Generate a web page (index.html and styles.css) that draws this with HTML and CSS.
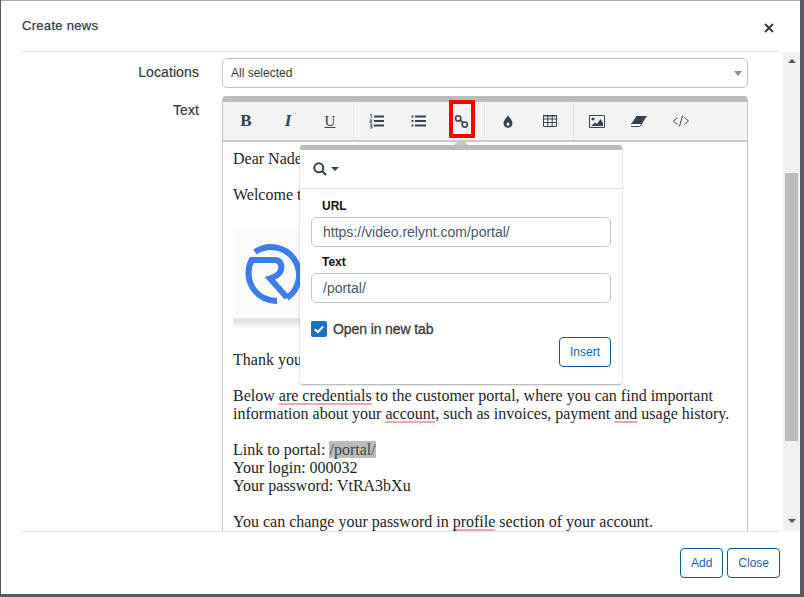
FILE: index.html
```html
<!DOCTYPE html>
<html lang="en">
<head>
<meta charset="UTF-8">
<title>Create news</title>
<link rel="stylesheet" href="styles.css">
</head>
<body>
<div class="modal">
    <div class="modalHeader">
        <h4>Create news</h4>
        <svg class="closeIcon" width="10" height="10" viewBox="0 0 10 10"><path d="M1 1l8 8M9 1l-8 8" stroke="#2f3b45" stroke-width="2"/></svg>
    </div>

    <div class="modalMiddle">
        <div class="modalBody">
            <div class="formRow">
                <label class="rowLabel">Locations</label>
                <div class="fakeSelect">
                    <span>All selected</span>
                    <i class="selectCaret"></i>
                </div>
            </div>
            <div class="formRow textRow">
                <label class="rowLabel">Text</label>
                <div class="editor">
                    <div class="toolbar">
                        <div class="toolGroup">
                            <button class="toolBtn serif"><b>B</b></button>
                            <button class="toolBtn serif"><b><i>I</i></b></button>
                            <button class="toolBtn serif underlined">U</button>
                        </div>
                        <div class="toolGroup">
                            <button class="toolBtn">
                                <svg width="16" height="16" viewBox="0 0 16 16"><path d="M5 3.500h10M5 8h10M5 12.500h10" stroke="#34434f" stroke-width="2"/><path d="M1 1.500h1.300v3.500M1 6.800h1.800v1.200h-1.800v1.400h2M1 11h2v4h-2M1 13h2" fill="none" stroke="#34434f" stroke-width=".8"/></svg>
                            </button>
                            <button class="toolBtn">
                                <svg width="16" height="16" viewBox="0 0 16 16"><path d="M4 3.500h11M4 8h11M4 12.500h11" stroke="#34434f" stroke-width="2"/><path d="M.5 2.500h2v2h-2zM.5 7h2v2h-2zM.5 11.500h2v2h-2z" fill="#34434f"/></svg>
                            </button>
                            <button class="toolBtn linkBtn">
                                <svg width="15" height="15" viewBox="0 0 15 15"><g fill="none" stroke="#34434f" stroke-width="1.600"><circle cx="4.200" cy="4.400" r="2.600"/><circle cx="10.800" cy="10.600" r="2.600"/><path d="M6 6.200l3 2.600"/></g></svg>
                                <span class="redBox"></span>
                            </button>
                        </div>
                        <div class="toolGroup">
                            <button class="toolBtn">
                                <svg width="12" height="15" viewBox="0 0 12 15"><path fill-rule="evenodd" d="M6 1c1 2.500 4.500 5 4.500 8.300a4.500 4.500 0 0 1-9 0C1.500 6 5 3.500 6 1zM6 8c-.8 1-1.500 1.500-1.500 2.300a1.500 1.500 0 0 0 3 0C7.500 9.500 6.800 9 6 8z" fill="#34434f"/></svg>
                            </button>
                            <button class="toolBtn">
                                <svg width="14" height="12" viewBox="0 0 14 12"><path d="M.5.500h13v11h-13zM.5 4h13M.5 7.500h13M4.800.500v11M9.200.500v11" fill="none" stroke="#34434f"/><path d="M0 0h14v1.500h-14z" fill="#34434f"/></svg>
                            </button>
                        </div>
                        <div class="toolGroup">
                            <button class="toolBtn">
                                <svg width="16" height="13" viewBox="0 0 16 13"><path d="M.5.500h15v12h-15z" fill="none" stroke="#34434f"/><circle cx="4" cy="4" r="1.600" fill="#34434f"/><path d="M2 11l4-3.500 2 1.500 3.500-5 2.500 4v3z" fill="#34434f"/></svg>
                            </button>
                            <button class="toolBtn">
                                <svg width="16" height="11" viewBox="0 0 16 11"><path d="M5.500 0h10.500l-5 7.500h-10.500z" fill="#34434f"/><path d="M.5 7.500h10.500l-2.300 3h-10z" fill="#fff" stroke="#34434f"/></svg>
                            </button>
                            <button class="toolBtn">
                                <svg width="16" height="12" viewBox="0 0 16 12"><path d="M4.500 2.500l-4 3.500 4 3.500M11.500 2.500l4 3.500-4 3.500M9.500 .5l-3 11" fill="none" stroke="#34434f"/></svg>
                            </button>
                        </div>
                    </div>

                    <div class="editArea">
                        <p>Dear Nade</p>
                        <p>Welcome t</p>
                        <div class="newsImage">
                            <svg width="200" height="91" viewBox="0 0 200 91"><g fill="none" stroke="#3f7ce8" stroke-width="6" filter="url(#soft)"><path d="M44 74a28 28 0 0 1-25.300-41h23.300c7 0 8 9 4 13.500c-3 3-6 4-9 5l17 19"/><path d="M22 25a28 28 0 0 1 32 46"/></g><defs><filter id="soft"><feGaussianBlur stdDeviation=".5"/></filter></defs></svg>
                        </div>
                        <p>Thank you</p>
                        <p>Below <span class="spell">are credentials</span> to the customer portal, where you can find important<br>
                        information about your <span class="spell">account</span>, such as invoices, payment <span class="spell">and</span> usage history.</p>
                        <p>Link to portal: <span class="picked">/portal/</span><br>
                        Your login: 000032<br>
                        Your password: VtRA3bXu</p>
                        <p>You can change your password in <span class="spell">profile</span> section of your account.</p>
                    </div>

                    <div class="linkPopover">
                        <i class="popArrow"></i>
                        <div class="popSearch">
                            <svg width="14" height="14" viewBox="0 0 14 14"><circle cx="5.800" cy="5.800" r="4.500" fill="none" stroke="#34434f" stroke-width="2"/><path d="M9 9l4 4" stroke="#34434f" stroke-width="2.200"/></svg>
                            <i class="searchCaret"></i>
                        </div>
                        <div class="popForm">
                            <label class="popLabel">URL</label>
                            <input class="popInput" type="text" value="https://video.relynt.com/portal/">
                            <label class="popLabel">Text</label>
                            <input class="popInput" type="text" value="/portal/">
                            <div class="checkLine">
                                <span class="fakeCheck">
                                    <svg width="16" height="16" viewBox="0 0 16 16"><path d="M3.800 8.200l3 2.800 5.400-5.600" fill="none" stroke="#fff" stroke-width="2"/></svg>
                                </span>
                                <span>Open in new tab</span>
                            </div>
                            <div class="popActions">
                                <button class="btn">Insert</button>
                            </div>
                        </div>
                    </div>
                </div>
            </div>
        </div>
        <div class="scrollbar">
            <i class="arrowUp"></i>
            <div class="scrollThumb"></div>
            <i class="arrowDown"></i>
        </div>
    </div>

    <div class="modalFooter">
        <button class="btn">Add</button>
        <button class="btn">Close</button>
    </div>
</div>
</body>
</html>
```

FILE: styles.css
```css
* {
    box-sizing: border-box;
}

html, body {
    margin: 0;
    padding: 0;
}

body {
    width: 804px;
    height: 597px;
    overflow: hidden;
    background-color: #565c61;
    font-family: "Liberation Sans", Arial, sans-serif;
    color: #2f3b45;
}

.modal {
    width: 799px;
    height: 594px;
    margin-left: 1px;
    border-top: 1px solid #a9acae;
    background-color: #fff;
    display: flex;
    flex-direction: column;
}

.modalHeader {
    height: 51px;
    margin: 0 20px 0 21px;
    border-bottom: 1px solid #e3e3e3;
    display: flex;
    justify-content: space-between;
    align-items: flex-start;
}

.modalHeader h4 {
    margin: 17px 0 0;
    font-size: 13px;
    line-height: 16px;
    font-weight: 500;
    letter-spacing: 0.3px;
    -webkit-text-stroke: 0.25px #2f3b45;
}

.closeIcon {
    margin: 22px 6px 0 0;
}

.modalMiddle {
    height: 479px;
    display: flex;
    overflow: hidden;
}

.modalBody {
    width: 782px;
    padding: 6px 35px 0 21px;
    overflow: hidden;
}

.formRow {
    display: grid;
    grid-template-columns: 177px 526px;
    column-gap: 23px;
}

.textRow {
    margin-top: 8px;
}

.rowLabel {
    font-size: 14px;
    line-height: 18px;
    padding-top: 5px;
    text-align: right;
    letter-spacing: 0.1px;
    -webkit-text-stroke: 0.2px #2f3b45;
}

.fakeSelect {
    height: 30px;
    padding: 0 8px;
    border: 1px solid #c4c4c4;
    border-radius: 5px;
    font-size: 12px;
    display: flex;
    align-items: center;
    justify-content: space-between;
}

.selectCaret {
    border-left: 4px solid transparent;
    border-right: 4px solid transparent;
    border-top: 5px solid #8a8f93;
    margin-right: -3px;
}

.editor {
    position: relative;
    height: 500px;
    border-top: 6px solid #bbb;
    border-left: 1px solid #c4c4c4;
    border-right: 1px solid #c4c4c4;
    border-radius: 4px 4px 0 0;
}

.toolbar {
    height: 40px;
    padding: 1px 0 0 2px;
    background-color: #f4f4f4;
    border-bottom: 2px solid #c9c9c9;
    display: flex;
    align-items: flex-start;
}

.toolGroup {
    display: flex;
    height: 36px;
    padding-right: 2px;
    margin-right: 2px;
    border-right: 1px solid #e6e6e6;
}

.toolGroup:last-child {
    border-right: none;
}

.toolBtn {
    position: relative;
    width: 42px;
    height: 36px;
    padding: 0;
    border: none;
    background: none;
    color: #34434f;
    display: flex;
    align-items: center;
    justify-content: center;
}

.serif {
    font-family: "Liberation Serif", serif;
    font-size: 17px;
}

.underlined {
    font-size: 15px;
    text-decoration: underline;
}

.redBox {
    position: absolute;
    left: 9px;
    top: -3px;
    width: 26px;
    height: 38px;
    border: 4px solid #f00;
    border-radius: 1px;
}

.editArea {
    padding: 8px 10px;
    font-family: "Liberation Serif", serif;
    font-size: 16px;
    line-height: 18px;
    color: #1e1e1e;
}

.editArea p {
    margin: 0 0 18px;
    white-space: nowrap;
}

.newsImage {
    height: 101px;
    width: 200px;
    margin: 23px 0 23px;
    background: linear-gradient(#fafafa 90%, #dcdcdc 91%, #fafafa 100%);
}

.newsImage svg {
    display: block;
}

.spell {
    text-decoration: underline #f8a0b4 2px;
    text-underline-offset: 2px;
    text-decoration-skip-ink: none;
}

.picked {
    background-color: #bcbcbc;
    color: #444;
}

.linkPopover {
    position: absolute;
    left: 77px;
    top: 43px;
    width: 322px;
    height: 239px;
    background-color: #fff;
    border-top: 5px solid #bbb;
    border-radius: 3px;
    box-shadow: 0 1px 2px rgba(0, 0, 0, 0.35);
    font-size: 14px;
}

.popArrow {
    position: absolute;
    left: 154px;
    top: -11px;
    border-left: 7px solid transparent;
    border-right: 7px solid transparent;
    border-bottom: 6px solid #c6c6c6;
}

.popSearch {
    height: 39px;
    padding-left: 13px;
    border-bottom: 1px solid #e3e3e3;
    display: flex;
    align-items: center;
    gap: 4px;
}

.searchCaret {
    border-left: 4px solid transparent;
    border-right: 4px solid transparent;
    border-top: 4px solid #34434f;
}

.popForm {
    padding: 9px 11px 0;
}

.popLabel {
    display: block;
    padding-left: 11px;
    font-size: 12px;
    line-height: 16px;
    font-weight: bold;
    color: #111;
}

.popInput {
    display: block;
    width: 300px;
    height: 30px;
    margin: 3px 0 7px;
    padding: 0 11px;
    border: 1px solid #c4c4c4;
    border-radius: 5px;
    font-family: "Liberation Sans", Arial, sans-serif;
    font-size: 14px;
    color: #4b5661;
}

.checkLine {
    display: flex;
    align-items: center;
    gap: 6px;
    margin-top: 18px;
    height: 16px;
    font-size: 14px;
    letter-spacing: -0.1px;
    -webkit-text-stroke: 0.3px #3a3a3a;
    color: #3a3a3a;
}

.fakeCheck {
    width: 16px;
    height: 16px;
    border-radius: 2px;
    background-color: #1a6fc9;
}

.popActions {
    display: flex;
    justify-content: flex-end;
}

.btn {
    height: 30px;
    padding: 0 10px;
    background-color: #fff;
    border: 1px solid #0a5c9e;
    border-radius: 4px;
    color: #1766ad;
    font-family: "Liberation Sans", Arial, sans-serif;
    font-size: 12px;
}

.scrollbar {
    width: 17px;
    background-color: #f0f0f0;
    display: flex;
    flex-direction: column;
    align-items: center;
}

.arrowUp {
    margin-top: 7px;
    border-left: 4px solid transparent;
    border-right: 4px solid transparent;
    border-bottom: 4px solid #505050;
}

.scrollThumb {
    width: 13px;
    height: 268px;
    margin-top: 110px;
    background-color: #bcbcbc;
}

.arrowDown {
    margin-top: 78px;
    border-left: 4px solid transparent;
    border-right: 4px solid transparent;
    border-top: 4px solid #505050;
}

.modalFooter {
    flex: 1;
    margin: 0 20px 0 21px;
    padding-top: 16px;
    border-top: 1px solid #e3e3e3;
    display: flex;
    justify-content: flex-end;
    align-items: flex-start;
    gap: 4px;
}
```
